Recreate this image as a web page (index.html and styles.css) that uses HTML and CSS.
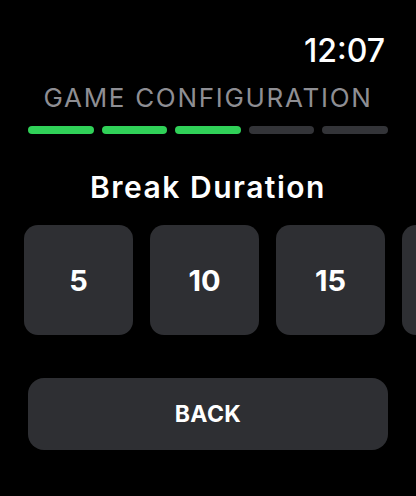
FILE: index.html
```html
<!DOCTYPE html>
<html>
<head>
<meta charset="utf-8">
<link rel="stylesheet" href="styles.css">
</head>
<body>
<div class="screen">
  <div class="status"><span class="time">12:07</span></div>
  <div class="heading">GAME CONFIGURATION</div>
  <div class="progress">
    <div class="seg done"></div>
    <div class="seg done"></div>
    <div class="seg done"></div>
    <div class="seg"></div>
    <div class="seg"></div>
  </div>
  <div class="title">Break Duration</div>
  <div class="options">
    <div class="tile">5</div>
    <div class="tile">10</div>
    <div class="tile">15</div>
    <div class="tile"></div>
  </div>
  <div class="actions">
    <div class="back">BACK</div>
  </div>
</div>
</body>
</html>
```
FILE: styles.css
```css
html, body {
  margin: 0;
  padding: 0;
  background: #000;
}
.screen {
  width: 416px;
  height: 496px;
  overflow: hidden;
  font-family: Inter, "Noto Sans", sans-serif;
  color: #fff;
  box-sizing: border-box;
  padding-top: 33px;
}
.status {
  display: flex;
  justify-content: flex-end;
  padding-right: 31px;
}
.time {
  font-size: 32px;
  line-height: 36px;
  font-weight: 500;
}
.heading {
  margin-top: 14px;
  text-align: center;
  font-size: 26px;
  line-height: 30px;
  color: #8e8e93;
  font-weight: 400;
  letter-spacing: 1.7px;
}
.progress {
  display: flex;
  gap: 8px;
  padding: 0 28px;
  margin-top: 13px;
}
.seg {
  flex: 1;
  height: 8px;
  border-radius: 4px;
  background: #333438;
}
.seg.done {
  background: #30d158;
}
.title {
  margin-top: 36px;
  text-align: center;
  font-size: 30px;
  line-height: 34px;
  font-weight: 600;
  letter-spacing: 1.5px;
}
.options {
  display: flex;
  gap: 17px;
  padding-left: 24px;
  margin-top: 21px;
  overflow: hidden;
}
.tile {
  flex: 0 0 109px;
  height: 110px;
  border-radius: 14px;
  background: #2e2f33;
  display: flex;
  align-items: center;
  justify-content: center;
  font-size: 29px;
  font-weight: 700;
}
.actions {
  padding: 0 28px;
  margin-top: 43px;
}
.back {
  height: 72px;
  border-radius: 16px;
  background: #2e2f33;
  display: flex;
  align-items: center;
  justify-content: center;
  font-size: 23px;
  font-weight: 700;
  letter-spacing: 0.4px;
}
```
